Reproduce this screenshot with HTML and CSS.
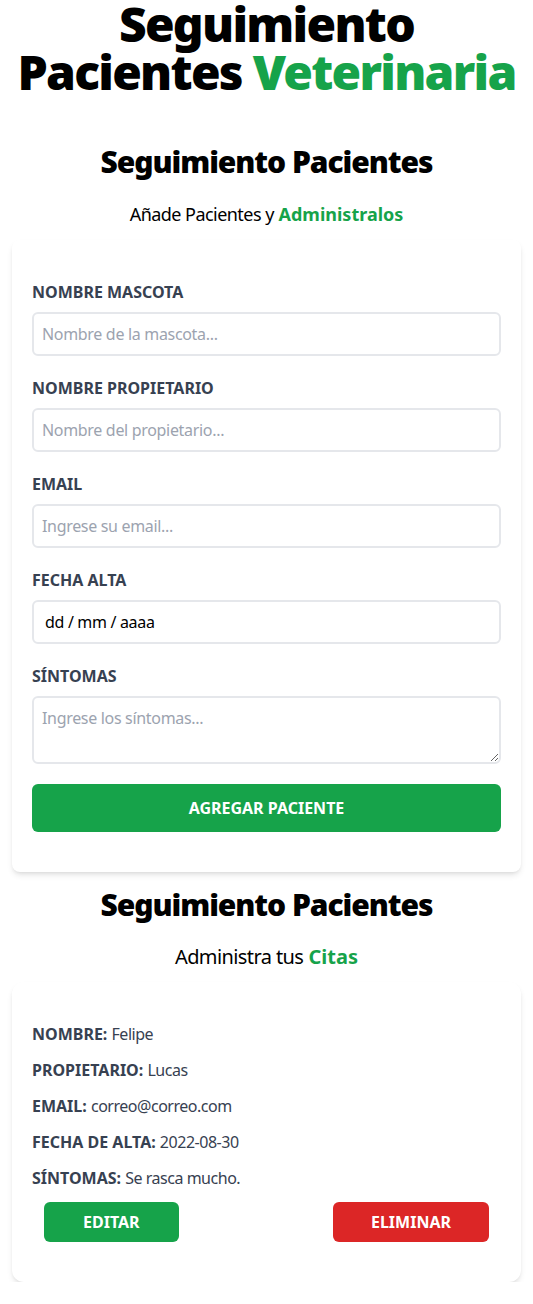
FILE: index.html
```html
<!DOCTYPE html>
<html lang="es">
<head>
<meta charset="utf-8">
<title>Seguimiento Pacientes Veterinaria</title>
<link rel="stylesheet" href="styles.css">
</head>
<body>
<div class="container">
  <h1 class="title">Seguimiento Pacientes <span class="green">Veterinaria</span></h1>
  <div class="columns">
    <section class="col">
      <h2 class="subtitle">Seguimiento Pacientes</h2>
      <p class="lead"><span class="reg">Añade Pacientes y</span> <span class="green bold">Administralos</span></p>
      <form class="card form">
        <div class="field">
          <label class="label" for="mascota">Nombre Mascota</label>
          <input class="input" id="mascota" type="text" placeholder="Nombre de la mascota...">
        </div>
        <div class="field">
          <label class="label" for="propietario">Nombre Propietario</label>
          <input class="input" id="propietario" type="text" placeholder="Nombre del propietario...">
        </div>
        <div class="field">
          <label class="label" for="email">Email</label>
          <input class="input" id="email" type="email" placeholder="Ingrese su email...">
        </div>
        <div class="field">
          <label class="label" for="alta">Fecha Alta</label>
          <input class="input date" id="alta" type="text" value="dd / mm / aaaa">
        </div>
        <div class="field">
          <label class="label" for="sintomas">Síntomas</label>
          <textarea class="input textarea" id="sintomas" rows="2" placeholder="Ingrese los síntomas..."></textarea>
        </div>
        <button class="submit" type="button">Agregar Paciente</button>
      </form>
    </section>
    <section class="col">
      <h2 class="subtitle second">Seguimiento Pacientes</h2>
      <p class="lead xl"><span class="reg">Administra tus</span> <span class="green bold">Citas</span></p>
      <div class="card patient">
        <p class="row">Nombre: <span class="value">Felipe</span></p>
        <p class="row">Propietario: <span class="value">Lucas</span></p>
        <p class="row">Email: <span class="value">correo@correo.com</span></p>
        <p class="row">Fecha de alta: <span class="value">2022-08-30</span></p>
        <p class="row">Síntomas: <span class="value">Se rasca mucho.</span></p>
        <div class="actions">
          <button class="btn edit" type="button">Editar</button>
          <button class="btn delete" type="button">Eliminar</button>
        </div>
      </div>
    </section>
  </div>
</div>
</body>
</html>
```
FILE: styles.css
```css
* { box-sizing: border-box; }
html, body { margin: 0; padding: 0; }
body {
  background: #ffffff;
  font-family: "Noto Sans", "Open Sans", sans-serif;
  color: #000;
  line-height: 1.5;
}
h1, h2, p { margin: 0; }
.green { color: #16a34a; }
.bold { font-weight: 700; }
.reg { letter-spacing: -0.03em; }

.title {
  font-size: 48px;
  line-height: 48px;
  font-weight: 900;
  text-align: center;
  letter-spacing: -0.036em;
  padding: 0 12px;
}
.columns { margin-top: 48px; }
.col { margin: 0 12px; }
.subtitle {
  font-size: 30px;
  line-height: 36px;
  font-weight: 900;
  text-align: center;
  letter-spacing: -0.035em;
}
.subtitle.second { margin-top: 15px; }
.lead {
  margin-top: 20px;
  font-size: 18px;
  line-height: 28px;
  text-align: center;
}
.lead.xl { font-size: 20px; }

.card {
  background: #fff;
  box-shadow: 0 4px 6px -1px rgba(0,0,0,0.1), 0 2px 4px -2px rgba(0,0,0,0.1);
  padding: 40px 20px;
}
.form { margin-top: 12px; border-radius: 8px; }
.field { margin-bottom: 20px; display: flex; flex-direction: column; }
.label {
  color: #374151;
  font-weight: 700;
  text-transform: uppercase;
  font-size: 16px;
  line-height: 24px;
}
.input {
  margin-top: 8px;
  width: 100%;
  border: 2px solid #e5e7eb;
  border-radius: 6px;
  padding: 8px;
  font-family: inherit;
  font-size: 16px;
  line-height: 24px;
  color: #000;
  background: #fff;
  letter-spacing: -0.02em;
}
.input::placeholder { color: #9ca3af; }
.date { padding-left: 11px; }
.textarea { display: block; resize: vertical; }
.submit {
  width: 100%;
  display: block;
  border: none;
  border-radius: 6px;
  background: #16a34a;
  color: #fff;
  font-family: inherit;
  font-weight: 700;
  text-transform: uppercase;
  font-size: 16px;
  line-height: 24px;
  padding: 12px;
}

.patient { margin-top: 11px; border-radius: 12px; }
.row {
  color: #374151;
  font-weight: 700;
  text-transform: uppercase;
  font-size: 16px;
  line-height: 24px;
  margin-bottom: 12px;
}
.value { font-weight: 400; text-transform: none; letter-spacing: -0.03em; }
.actions {
  display: flex;
  justify-content: space-between;
  padding: 0 12px;
}
.btn {
  border: none;
  border-radius: 6px;
  color: #fff;
  font-family: inherit;
  font-weight: 700;
  text-transform: uppercase;
  font-size: 16px;
  line-height: 24px;
  padding: 8px 39px;
}
.edit { background: #16a34a; }
.delete { background: #dc2626; padding: 8px 38px; }
```
